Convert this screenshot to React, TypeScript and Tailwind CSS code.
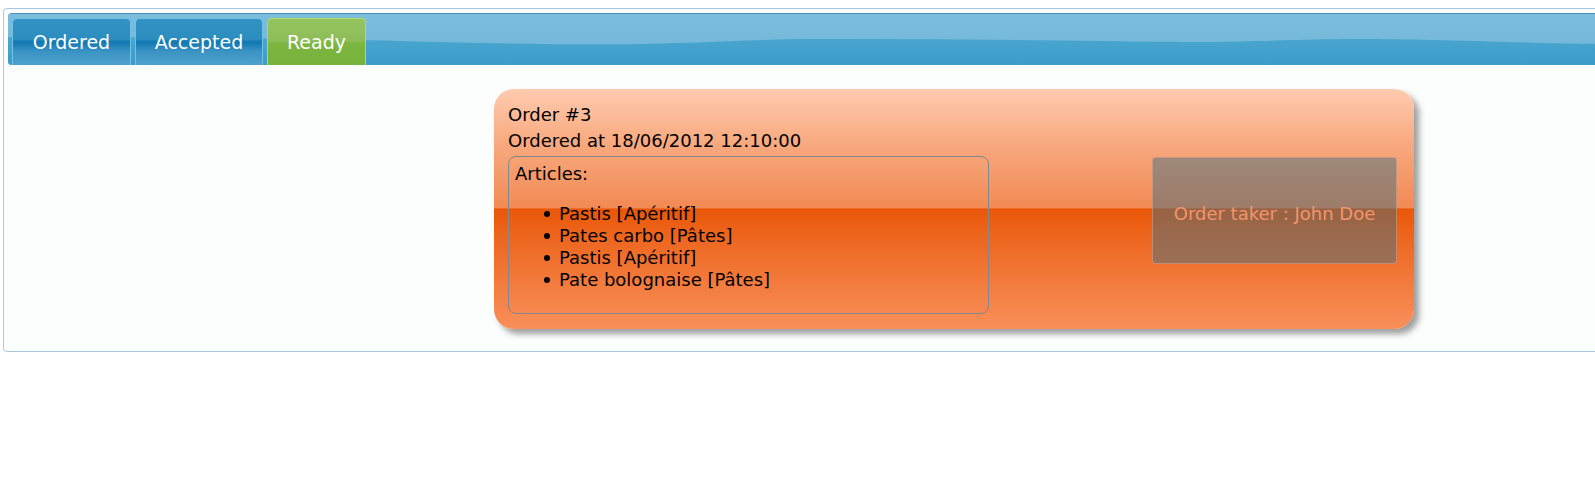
import React from "react";

const font = { fontFamily: '"DejaVu Sans", Verdana, sans-serif' };

function Tab({ label, width, active }: { label: string; width: string; active?: boolean }) {
  const cls = active
    ? "border-[#b4da66] bg-[linear-gradient(to_bottom,#95c362_0%,#8dbd57_48%,#7cb540_52%,#78b23a_100%)]"
    : "border-[#72c0e6] bg-[linear-gradient(to_bottom,#3292c3_0%,#2c8dbf_44%,#0f77b0_50%,#3a93c4_70%,#4fa2cc_100%)]";
  return (
    <div
      className={`${width} ${cls} flex h-[47px] items-center justify-center rounded-t-[5px] border border-b-0 text-[19px] text-white`}
    >
      {label}
    </div>
  );
}

export default function App() {
  const items = ["Pastis [Apéritif]", "Pates carbo [Pâtes]", "Pastis [Apéritif]", "Pate bolognaise [Pâtes]"];
  return (
    <div className="h-[493px] w-full overflow-hidden bg-white" style={font}>
      <div className="ml-[3px] mt-[8px] w-[1620px] rounded-[4px] border border-[#a6c9e2] bg-[#fcfdfd] p-1">
        <div className="relative h-[52px] overflow-hidden rounded-[4px] border-t border-[#4a8fc5] bg-[#77bbdb]">
          <svg className="absolute inset-0 h-full w-full" viewBox="0 0 1610 51" preserveAspectRatio="none">
            <defs>
              <linearGradient id="top" x1="0" y1="0" x2="0" y2="1">
                <stop offset="0" stopColor="#7bbddc" />
                <stop offset="1" stopColor="#70b5d8" />
              </linearGradient>
              <linearGradient id="bot" x1="0" y1="0" x2="0" y2="1">
                <stop offset="0" stopColor="#48a6cf" />
                <stop offset="1" stopColor="#3d9bca" />
              </linearGradient>
            </defs>
            <rect x="0" y="0" width="1610" height="51" fill="url(#top)" />
            <path
              d="M0,23 C150,23 300,25 392,27 C470,29 540,30.5 600,30.3 C680,30 740,25.5 800,25 C900,24.5 1000,26 1100,27 C1160,28 1200,28.5 1250,27 C1290,26 1320,25 1350,25 C1400,25 1450,26.5 1522,28.7 C1560,29.5 1590,30 1610,30 L1610,51 L0,51 Z"
              fill="url(#bot)"
            />
          </svg>
          <div className="relative flex h-full items-end gap-[4px] pl-[4px]">
            <Tab label="Ordered" width="w-[119px]" />
            <Tab label="Accepted" width="w-[128px]" />
            <Tab label="Ready" width="w-[99px]" active />
          </div>
        </div>
        <div className="pb-[18px] pl-[486px] pt-[24px]">
          <div className="w-[920px] rounded-[20px] bg-[linear-gradient(to_bottom,#ffcbb0_0%,#f8aa80_22%,#f28a54_49.5%,#ea5708_50%,#ee6a24_65%,#f98f5a_100%)] pb-[15px] pl-[14px] pr-[17px] pt-[13px] text-[18px] text-black shadow-[5px_5px_6px_rgba(0,0,0,0.38)]">
            <div className="h-[26px] leading-[26px]">Order #3</div>
            <div className="h-[26px] leading-[26px]">Ordered at 18/06/2012 12:10:00</div>
            <div className="mt-[2px] flex items-start justify-between">
              <div className="h-[158px] w-[481px] rounded-[8px] border border-[#7f8890] pl-[6px] pt-[6px]">
                <div className="leading-[22px]">Articles:</div>
                <ul className="mt-[18px] pl-[29px]">
                  {items.map((it, i) => (
                    <li key={i} className="flex h-[22px] items-center leading-[22px]">
                      <span className="mr-[9px] h-[6px] w-[6px] shrink-0 rounded-full bg-black" />
                      {it}
                    </li>
                  ))}
                </ul>
              </div>
              <div className="mt-[1px] flex h-[107px] w-[245px] items-center justify-center rounded-[4px] border border-[rgba(235,180,150,0.45)] bg-[rgba(72,110,125,0.5)] pt-[5px] text-[18px] text-[#f3946a]">
                Order taker : John Doe
              </div>
            </div>
          </div>
        </div>
      </div>
    </div>
  );
}
